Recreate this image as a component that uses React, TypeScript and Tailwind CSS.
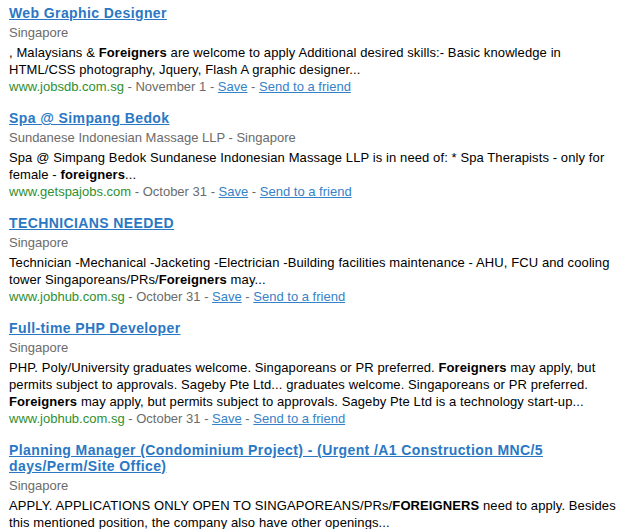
import * as React from "react";

interface Job {
  title: string[];
  location: string;
  body: React.ReactNode[];
  site: string;
  date: string;
}

const jobs: Job[] = [
  {
    title: ["Web Graphic Designer"],
    location: "Singapore",
    body: [
      <>
        , Malaysians &amp; <b>Foreigners</b> are welcome to apply Additional desired skills:- Basic knowledge in
      </>,
      <>HTML/CSS photography, Jquery, Flash A graphic designer...</>,
    ],
    site: "www.jobsdb.com.sg",
    date: "November 1",
  },
  {
    title: ["Spa @ Simpang Bedok"],
    location: "Sundanese Indonesian Massage LLP - Singapore",
    body: [
      <>Spa @ Simpang Bedok Sundanese Indonesian Massage LLP is in need of: * Spa Therapists - only for</>,
      <>
        female - <b>foreigners</b>...
      </>,
    ],
    site: "www.getspajobs.com",
    date: "October 31",
  },
  {
    title: ["TECHNICIANS NEEDED"],
    location: "Singapore",
    body: [
      <>Technician -Mechanical -Jacketing -Electrician -Building facilities maintenance - AHU, FCU and cooling</>,
      <>
        tower Singaporeans/PRs/<b>Foreigners</b> may...
      </>,
    ],
    site: "www.jobhub.com.sg",
    date: "October 31",
  },
  {
    title: ["Full-time PHP Developer"],
    location: "Singapore",
    body: [
      <>
        PHP. Poly/University graduates welcome. Singaporeans or PR preferred. <b>Foreigners</b> may apply, but
      </>,
      <>permits subject to approvals. Sageby Pte Ltd... graduates welcome. Singaporeans or PR preferred.</>,
      <>
        <b>Foreigners</b> may apply, but permits subject to approvals. Sageby Pte Ltd is a technology start-up...
      </>,
    ],
    site: "www.jobhub.com.sg",
    date: "October 31",
  },
  {
    title: ["Planning Manager (Condominium Project) - (Urgent /A1 Construction MNC/5", "days/Perm/Site Office)"],
    location: "Singapore",
    body: [
      <>
        APPLY. APPLICATIONS ONLY OPEN TO SINGAPOREANS/PRs/<b>FOREIGNERS</b> need to apply. Besides
      </>,
      <>this mentioned position, the company also have other openings...</>,
    ],
    site: "",
    date: "",
  },
];

function JobResult({ job }: { job: Job }) {
  return (
    <div className="mb-[14px]">
      <a href="#" className="block text-[14px] leading-[16px] font-bold text-[#2a78c4] underline tracking-[0.4px]">
        {job.title.map((t, i) => (
          <div key={i} className="whitespace-nowrap">
            {t}
          </div>
        ))}
      </a>
      <div className="mt-[3px] text-[13px] leading-[18px] text-[#6b6b6b] whitespace-nowrap">{job.location}</div>
      <div className="mt-[2px] text-[13px] leading-[17px] text-black tracking-[0.1px]">
        {job.body.map((line, i) => (
          <div key={i} className="whitespace-nowrap">
            {line}
          </div>
        ))}
      </div>
      {job.site && (
        <div className="text-[13px] leading-[18px] text-[#6b6b6b] whitespace-nowrap">
          <span className="text-[#2f8f2f]">{job.site}</span> - {job.date} -{" "}
          <a href="#" className="text-[#3682c8] underline">
            Save
          </a>{" "}
          -{" "}
          <a href="#" className="text-[#3682c8] underline">
            Send to a friend
          </a>
        </div>
      )}
    </div>
  );
}

export default function App() {
  return (
    <div className="w-[621px] h-[529px] overflow-hidden bg-white pl-[9px] pt-[5px] font-['Arial','Liberation_Sans',sans-serif]">
      {jobs.map((job, i) => (
        <JobResult key={i} job={job} />
      ))}
    </div>
  );
}
